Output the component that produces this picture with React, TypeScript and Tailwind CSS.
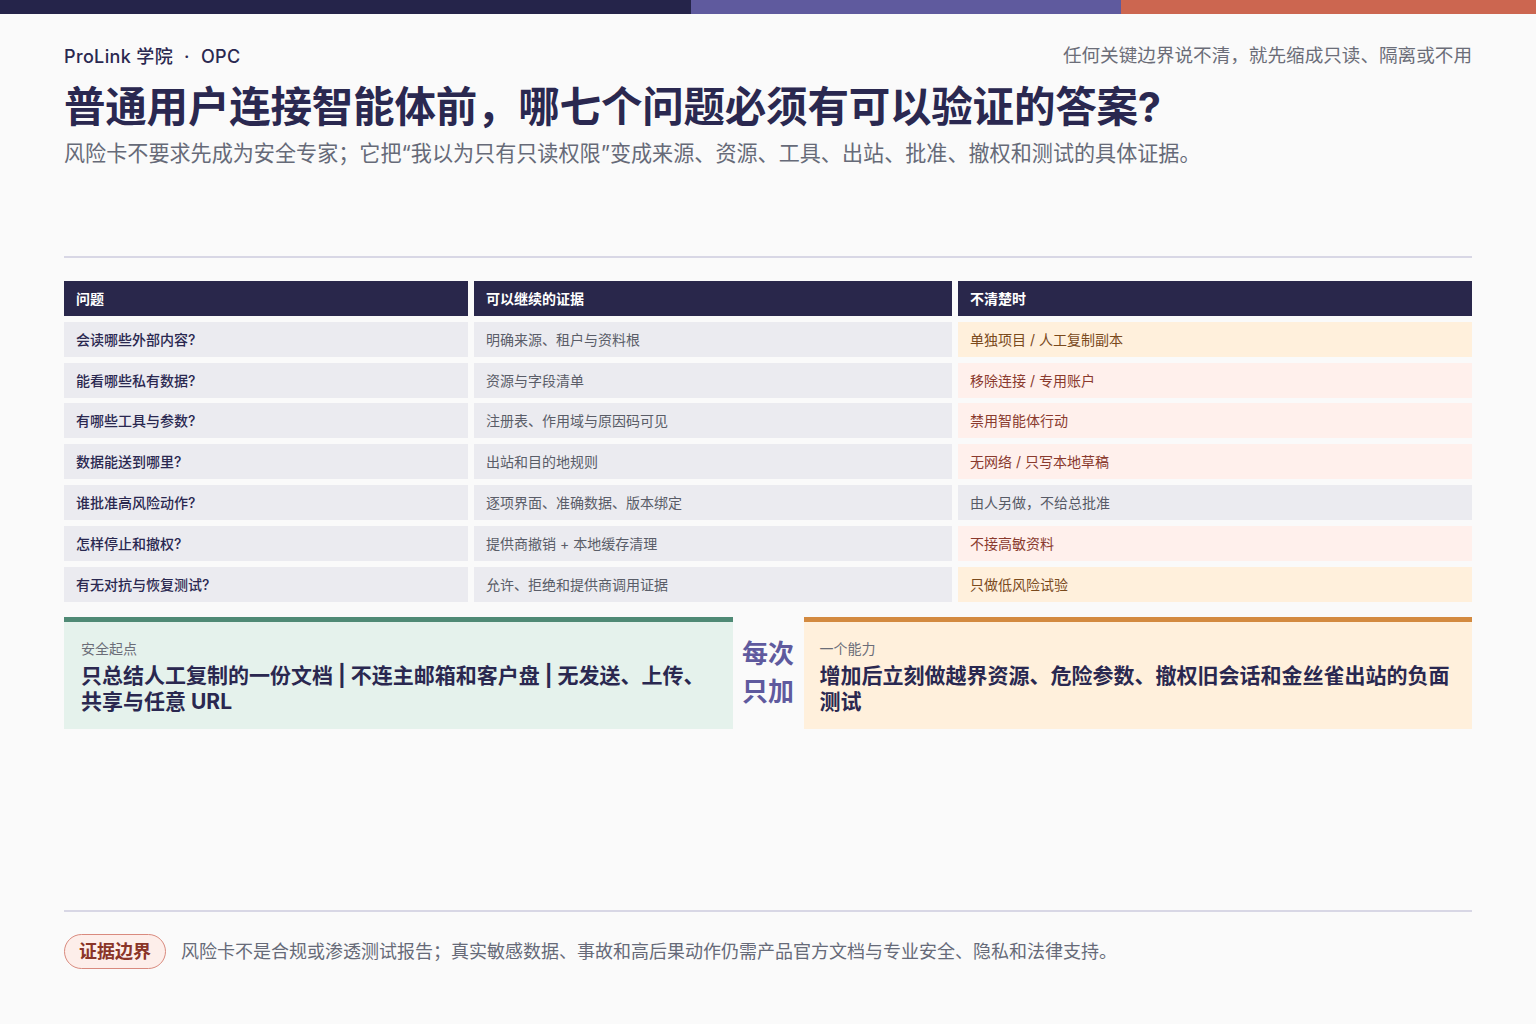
const rows = [
  { q: '会读哪些外部内容?', e: '明确来源、租户与资料根', f: '单独项目 / 人工复制副本', tone: 'amber' },
  { q: '能看哪些私有数据?', e: '资源与字段清单', f: '移除连接 / 专用账户', tone: 'rose' },
  { q: '有哪些工具与参数?', e: '注册表、作用域与原因码可见', f: '禁用智能体行动', tone: 'rose' },
  { q: '数据能送到哪里?', e: '出站和目的地规则', f: '无网络 / 只写本地草稿', tone: 'rose' },
  { q: '谁批准高风险动作?', e: '逐项界面、准确数据、版本绑定', f: '由人另做，不给总批准', tone: 'gray' },
  { q: '怎样停止和撤权?', e: '提供商撤销 + 本地缓存清理', f: '不接高敏资料', tone: 'rose' },
  { q: '有无对抗与恢复测试?', e: '允许、拒绝和提供商调用证据', f: '只做低风险试验', tone: 'amber' },
];

const toneClass: Record<string, string> = {
  amber: 'bg-[#fff0dc] text-[#7a4a1c]',
  rose: 'bg-[#fff0ec] text-[#8a3a2e]',
  gray: 'bg-[#ebebf0] text-[#575a66]',
};

export default function App() {
  return (
    <div className="h-[1024px] bg-[#fafafa] flex flex-col font-['Inter','Noto_Sans_CJK_SC',sans-serif] overflow-hidden">
      {/* top stripe */}
      <div className="flex h-[14px] shrink-0">
        <div className="w-[691px] bg-[#25244a]" />
        <div className="w-[430px] bg-[#5f5a9e]" />
        <div className="flex-1 bg-[#cc6650]" />
      </div>

      <div className="flex-1 flex flex-col px-16">
        {/* header */}
        <div className="flex items-center justify-between mt-[30px] h-6">
          <div className="flex items-center gap-[11px] text-[18px] text-[#2a2850] font-medium tracking-[0.02em]">
            <span>ProLink 学院</span>
            <span>·</span>
            <span>OPC</span>
          </div>
          <div className="text-[18.6px] text-[#6b6d78]">任何关键边界说不清，就先缩成只读、隔离或不用</div>
        </div>
        <h1 className="mt-[14px] text-[41.5px] leading-[50px] font-bold text-[#2a2850] tracking-[-0.2px]">
          普通用户连接智能体前，哪七个问题必须有可以验证的答案?
        </h1>
        <p className="mt-[8px] text-[21.1px] leading-7 text-[#666a78]">
          风险卡不要求先成为安全专家；它把“我以为只有只读权限”变成来源、资源、工具、出站、批准、撤权和测试的具体证据。
        </p>

        <div className="mt-[88px] h-[2px] bg-[#d8d7e5]" />

        {/* table */}
        <div className="mt-[23px] grid grid-cols-[404px_478px_1fr] gap-x-[6px] gap-y-[5.8px] text-[14px]">
          <div className="h-[35px] bg-[#29274b] text-white font-bold flex items-center px-3">问题</div>
          <div className="h-[35px] bg-[#29274b] text-white font-bold flex items-center px-3">可以继续的证据</div>
          <div className="h-[35px] bg-[#29274b] text-white font-bold flex items-center px-3">不清楚时</div>
          {rows.map((r) => (
            <>
              <div key={r.q + 'q'} className="h-[35px] bg-[#ebebf0] text-[#2a2850] font-medium flex items-center px-3">{r.q}</div>
              <div key={r.q + 'e'} className="h-[35px] bg-[#ebebf0] text-[#5a5d68] flex items-center px-3">{r.e}</div>
              <div key={r.q + 'f'} className={`h-[35px] flex items-center px-3 ${toneClass[r.tone]}`}>{r.f}</div>
            </>
          ))}
        </div>

        {/* cards */}
        <div className="mt-[15px] grid grid-cols-[1fr_71px_1fr]">
          <div className="bg-[#e5f2ec] border-t-[5px] border-[#4f8a75] pl-[17px] pr-[24px] pt-[17px] pb-[14px] min-h-[111px]">
            <div className="text-[14px] text-[#6b6d78] leading-5">安全起点</div>
            <div className="mt-[4px] text-[21px] leading-[26px] font-bold text-[#2a2850]">
              只总结人工复制的一份文档 | 不连主邮箱和客户盘 | 无发送、上传、共享与任意 URL
            </div>
          </div>
          <div className="flex items-center justify-center text-center">
            <div className="text-[26px] leading-[38px] font-bold text-[#5f5a9e]">
              每次<br />只加
            </div>
          </div>
          <div className="bg-[#fff0dc] border-t-[5px] border-[#d38a40] pl-[16px] pr-[14px] pt-[17px] pb-[14px] min-h-[111px]">
            <div className="text-[14px] text-[#6b6d78] leading-5">一个能力</div>
            <div className="mt-[4px] text-[21px] leading-[26px] font-bold text-[#2a2850]">
              增加后立刻做越界资源、危险参数、撤权旧会话和金丝雀出站的负面测试
            </div>
          </div>
        </div>

        {/* footer */}
        <div className="mt-auto h-[2px] bg-[#d8d7e5]" />
        <div className="flex items-center gap-[15px] mt-[22px] mb-[55px]">
          <div className="h-[35px] px-[14px] rounded-full border border-[#d98a7e] bg-[#fdeeea] text-[#8a3528] text-[18px] font-bold flex items-center">
            证据边界
          </div>
          <div className="text-[18px] text-[#666a78]">
            风险卡不是合规或渗透测试报告；真实敏感数据、事故和高后果动作仍需产品官方文档与专业安全、隐私和法律支持。
          </div>
        </div>
      </div>
    </div>
  );
}
